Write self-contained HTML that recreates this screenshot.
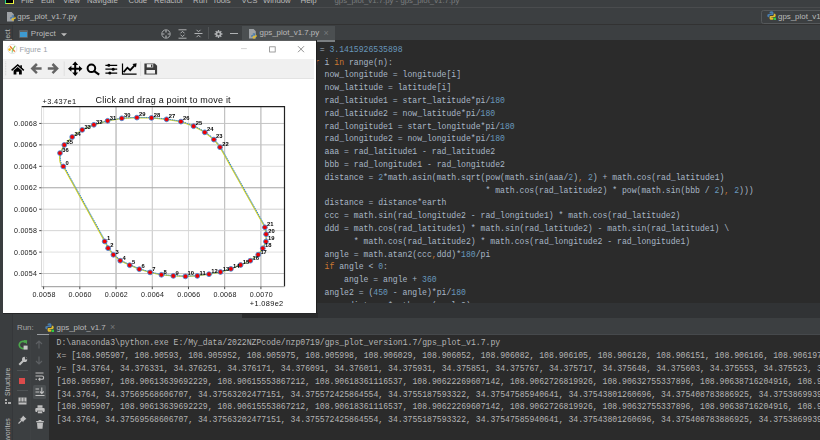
<!DOCTYPE html>
<html><head><meta charset="utf-8">
<style>
*{margin:0;padding:0;box-sizing:border-box}
html,body{width:820px;height:440px;overflow:hidden;background:#2b2b2b;font-family:"Liberation Sans",sans-serif}
.a{position:absolute}
.ui{color:#bbbbbb;font-size:7.9px;white-space:pre;line-height:10px}
svg.a{overflow:visible}
#menubar{left:0;top:0;width:820px;height:7.5px;background:#3c3f41;overflow:hidden;border-bottom:1px solid #4a4c4e}
#menubar span{position:absolute;top:-4px;font-size:7.8px;line-height:10px;color:#bbbbbb}
#navbar{left:0;top:7.5px;width:820px;height:17.5px;background:#3c3f41;border-bottom:1px solid #323232}
#toolhdr{left:0;top:25px;width:820px;height:15px;background:#3c3f41}
#lstrip{left:0;top:25px;width:13px;height:415px;background:#3a3d3f;border-right:1px solid #35373a}
#editor{left:316px;top:40px;width:504px;height:263.3px;background:#2b2b2b;overflow:hidden}
pre{font-family:"Liberation Mono",monospace;font-size:8.13px;line-height:12.8px;color:#a9b7c6;white-space:pre}
pre b{font-weight:normal}
pre .k{color:#cc7832}
pre .n{color:#6897bb}
#code{position:absolute;left:-11px;top:3.8px}
#band1{left:242px;top:303.3px;width:578px;height:14.7px;background:#313335}
#runhdr{left:13px;top:318px;width:807px;height:17.4px;background:#3c3f41}
#runleft{left:13px;top:335.4px;width:36px;height:105px;background:#3c3f41}
#console{left:48.5px;top:335.4px;width:772px;height:105px;background:#2b2b2b;overflow:hidden}
#con{position:absolute;left:8px;top:2px;color:#b4b4b4;font-size:8.13px}
#fig{left:3px;top:39.6px;width:313px;height:273.2px;background:#ffffff;border-top:1px solid #5c5e60}
#figtb{left:3px;top:59px;width:311px;height:19.5px;background:#f0f0f0;border-bottom:1px solid #e3e3e3}
#plot{left:0;top:0;width:820px;height:440px;will-change:transform}
.g{stroke-width:1}
.sp{stroke:#222;stroke-width:1.2;fill:none}
.sp2{stroke:#b0b0b0;stroke-width:0.8;fill:none}
.tk{stroke:#222;stroke-width:0.8}
.tl{font-size:7.1px;fill:#222;letter-spacing:0.25px}
.tt{font-size:9px;fill:#111;letter-spacing:0.2px}
.ot{font-size:7.4px;fill:#111;letter-spacing:0.35px}
.ln1{stroke:#cfcf30;stroke-width:1.3;fill:none}
.ln2{stroke:#3a8ad8;stroke-width:1.0;fill:none;stroke-dasharray:1.4 0.8}
.mk{fill:#f00000;stroke:#3f86d6;stroke-width:0.85}
.lb{font-size:5.8px;font-weight:bold;fill:#000}
.ic{stroke:#afb1b3;fill:none}
</style></head><body>
<div id="menubar" class="a">
 <div class="a" style="left:4.8px;top:-3px;width:9px;height:6.7px;background:#000;border:0.8px solid #21d789;border-right-color:#fcf84a;border-bottom-color:#d8e83a"></div>
 <span style="left:21px">File</span><span style="left:41px">Edit</span><span style="left:63px">View</span><span style="left:87px">Navigate</span><span style="left:128.5px">Code</span><span style="left:154px">Refactor</span><span style="left:193px">Run</span><span style="left:212.5px">Tools</span><span style="left:241.5px">VCS</span><span style="left:263px">Window</span><span style="left:300.5px">Help</span>
 <span style="left:334.5px;color:#7a7c7e">gps_plot_v1.7.py - gps_plot_v1.7.py</span>
</div>
<div id="navbar" class="a">
 <svg class="a" style="left:7.0px;top:4.0px" width="7" height="9.5" viewBox="0 0 7 9.5"><path d="M0 0 H4.6 L6.8 2.2 V9.5 H0Z" fill="#9ea2a6"/></svg><svg class="a" style="left:9.6px;top:7.6px" width="5.9" height="5.9" viewBox="0 0 9 9"><path d="M4.4 0.3 C2.6 0.3 2.6 1.1 2.6 1.6 V2.6 H4.6 V3 H1.6 C0.6 3 0.3 3.8 0.3 4.6 C0.3 5.6 0.7 6.3 1.5 6.3 H2.2 V5.2 C2.2 4.5 2.8 3.9 3.5 3.9 H5.5 C6.1 3.9 6.4 3.5 6.4 3 V1.6 C6.4 0.9 5.7 0.3 4.4 0.3Z" fill="#4a7cab"/><path d="M4.6 8.7 C6.4 8.7 6.4 7.9 6.4 7.4 V6.4 H4.4 V6 H7.4 C8.4 6 8.7 5.2 8.7 4.4 C8.7 3.4 8.3 2.7 7.5 2.7 H6.8 V3.8 C6.8 4.5 6.2 5.1 5.5 5.1 H3.5 C2.9 5.1 2.6 5.5 2.6 6 V7.4 C2.6 8.1 3.3 8.7 4.6 8.7Z" fill="#e0bc2e"/></svg>
 <div class="a ui" style="left:17.3px;top:4px">gps_plot_v1.7.py</div>
 <div class="a" style="left:760.7px;top:2.5px;width:70px;height:13.5px;border:1px solid #55585a;border-radius:2.5px"></div>
 <svg class="a" style="left:766.5px;top:3.5px" width="9.0" height="9.0" viewBox="0 0 9 9"><path d="M4.4 0.3 C2.6 0.3 2.6 1.1 2.6 1.6 V2.6 H4.6 V3 H1.6 C0.6 3 0.3 3.8 0.3 4.6 C0.3 5.6 0.7 6.3 1.5 6.3 H2.2 V5.2 C2.2 4.5 2.8 3.9 3.5 3.9 H5.5 C6.1 3.9 6.4 3.5 6.4 3 V1.6 C6.4 0.9 5.7 0.3 4.4 0.3Z" fill="#4a7cab"/><path d="M4.6 8.7 C6.4 8.7 6.4 7.9 6.4 7.4 V6.4 H4.4 V6 H7.4 C8.4 6 8.7 5.2 8.7 4.4 C8.7 3.4 8.3 2.7 7.5 2.7 H6.8 V3.8 C6.8 4.5 6.2 5.1 5.5 5.1 H3.5 C2.9 5.1 2.6 5.5 2.6 6 V7.4 C2.6 8.1 3.3 8.7 4.6 8.7Z" fill="#e0bc2e"/><rect x="6.6" y="6.6" width="2.4" height="2.4" fill="#2ecc40"/></svg>
 <div class="a ui" style="left:778px;top:4.6px">gps_plot_v1.7.py</div>
</div>
<div id="toolhdr" class="a">
 <div class="a" style="left:19px;top:5px;width:9px;height:8.3px;background:#5e6265;border-radius:1px"></div>
 <div class="a" style="left:20.3px;top:6.6px;width:6.4px;height:5px;background:#3d9ad1"></div>
 <div class="a ui" style="left:30.8px;top:4.2px;font-size:8px;color:#bbbbbb">Project</div>
 <svg class="a" style="left:61px;top:7.5px" width="6" height="4" viewBox="0 0 6 4"><path d="M0 0.3 H6 L3 3.3Z" fill="#bbbbbb"/></svg>
 <svg class="a" style="left:161px;top:4.2px" width="10" height="10" viewBox="0 0 10 10">
  <circle cx="5" cy="5" r="4.2" class="ic" stroke-width="0.9"/>
  <path d="M5 1.2V3.4 M5 6.6V8.8 M1.2 5H3.4 M6.6 5H8.8" class="ic" stroke-width="1.2"/>
 </svg>
 <svg class="a" style="left:177.5px;top:4px" width="9" height="10" viewBox="0 0 9 10">
  <path d="M0.5 0.8H8.5 M0.5 9.2H8.5" class="ic" stroke-width="1"/>
  <path d="M2.5 4.3L4.5 2.3L6.5 4.3 M2.5 5.7L4.5 7.7L6.5 5.7" class="ic" stroke-width="1"/>
 </svg>
 <svg class="a" style="left:194px;top:4.2px" width="9" height="9" viewBox="0 0 9 9">
  <path d="M0.5 4.5H8.5" class="ic" stroke-width="1"/>
  <path d="M2.5 0.8L4.5 2.8L6.5 0.8 M2.5 8.2L4.5 6.2L6.5 8.2" class="ic" stroke-width="1"/>
 </svg>
 <div class="a" style="left:207.8px;top:2px;width:1px;height:12px;background:#515456"></div>
 <svg class="a" style="left:213.5px;top:4.6px" width="9" height="8" viewBox="0 0 9 8">
  <path d="M3.82 0.06 L5.18 0.06 L5.14 1.17 L6.05 1.55 L6.81 0.73 L7.77 1.69 L6.95 2.45 L7.33 3.36 L8.44 3.32 L8.44 4.68 L7.33 4.64 L6.95 5.55 L7.77 6.31 L6.81 7.27 L6.05 6.45 L5.14 6.83 L5.18 7.94 L3.82 7.94 L3.86 6.83 L2.95 6.45 L2.19 7.27 L1.23 6.31 L2.05 5.55 L1.67 4.64 L0.56 4.68 L0.56 3.32 L1.67 3.36 L2.05 2.45 L1.23 1.69 L2.19 0.73 L2.95 1.55 L3.86 1.17Z" fill="#afb1b3"/>
  <circle cx="4.5" cy="4" r="1.2" fill="#3c3f41"/>
 </svg>
 <div class="a" style="left:229.7px;top:8.2px;width:8px;height:1.2px;background:#afb1b3"></div>
 <div class="a" style="left:242px;top:1px;width:92.7px;height:14px;background:#4b4f51"></div>
 <div class="a" style="left:242px;top:14.5px;width:92.7px;height:2px;background:#7b7f82"></div>
 <svg class="a" style="left:248.7px;top:4.0px" width="7" height="9.5" viewBox="0 0 7 9.5"><path d="M0 0 H4.6 L6.8 2.2 V9.5 H0Z" fill="#9ea2a6"/></svg><svg class="a" style="left:251.3px;top:7.6px" width="5.9" height="5.9" viewBox="0 0 9 9"><path d="M4.4 0.3 C2.6 0.3 2.6 1.1 2.6 1.6 V2.6 H4.6 V3 H1.6 C0.6 3 0.3 3.8 0.3 4.6 C0.3 5.6 0.7 6.3 1.5 6.3 H2.2 V5.2 C2.2 4.5 2.8 3.9 3.5 3.9 H5.5 C6.1 3.9 6.4 3.5 6.4 3 V1.6 C6.4 0.9 5.7 0.3 4.4 0.3Z" fill="#4a7cab"/><path d="M4.6 8.7 C6.4 8.7 6.4 7.9 6.4 7.4 V6.4 H4.4 V6 H7.4 C8.4 6 8.7 5.2 8.7 4.4 C8.7 3.4 8.3 2.7 7.5 2.7 H6.8 V3.8 C6.8 4.5 6.2 5.1 5.5 5.1 H3.5 C2.9 5.1 2.6 5.5 2.6 6 V7.4 C2.6 8.1 3.3 8.7 4.6 8.7Z" fill="#e0bc2e"/></svg>
 <div class="a ui" style="left:259.5px;top:2.8px">gps_plot_v1.7.py</div>
 <div class="a ui" style="left:323.5px;top:2.5px;font-size:9px;color:#75787a">×</div>
</div>
<div id="lstrip" class="a">
 <div class="a ui" style="left:3px;top:25.5px;transform-origin:0 0;transform:rotate(-90deg);font-size:7px;color:#bbbbbb">Project</div>
 <div class="a ui" style="left:3px;top:371px;transform-origin:0 0;transform:rotate(-90deg);font-size:7px;color:#bbbbbb">Structure</div>
 <svg class="a" style="left:5px;top:373.5px" width="6" height="5" viewBox="0 0 6 5"><rect x="0" y="0" width="2" height="2" fill="#aaa"/><rect x="0" y="3" width="2" height="2" fill="#aaa"/><rect x="3" y="3" width="3" height="2" fill="#aaa"/></svg>
 <div class="a ui" style="left:3px;top:421.5px;transform-origin:0 0;transform:rotate(-90deg);font-size:7px;color:#bbbbbb">Favorites</div>
</div>
<div id="editor" class="a"><pre id="code">pi = <b class="n">3.1415926535898</b>
<b class="k">for</b> i <b class="k">in</b> range(n):
    now_longitude = longitude[i]
    now_latitude = latitude[i]
    rad_latitude1 = start_latitude*pi/<b class="n">180</b>
    rad_latitude2 = now_latitude*pi/<b class="n">180</b>
    rad_longitude1 = start_longitude*pi/<b class="n">180</b>
    rad_longitude2 = now_longitude*pi/<b class="n">180</b>
    aaa = rad_latitude1 - rad_latitude2
    bbb = rad_longitude1 - rad_longitude2
    distance = <b class="n">2</b>*math.asin(math.sqrt(pow(math.sin(aaa/<b class="n">2</b>)<b class="k">,</b> <b class="n">2</b>) + math.cos(rad_latitude1)
                                     * math.cos(rad_latitude2) * pow(math.sin(bbb / <b class="n">2</b>)<b class="k">,</b> <b class="n">2</b>)))
    distance = distance*earth
    ccc = math.sin(rad_longitude2 - rad_longitude1) * math.cos(rad_latitude2)
    ddd = math.cos(rad_latitude1) * math.sin(rad_latitude2) - math.sin(rad_latitude1) \
          * math.cos(rad_latitude2) * math.cos(rad_longitude2 - rad_longitude1)
    angle = math.atan2(ccc<b class="k">,</b>ddd)*<b class="n">180</b>/pi
    <b class="k">if</b> angle &lt; <b class="n">0</b>:
        angle = angle + <b class="n">360</b>
    angle2 = (<b class="n">450</b> - angle)*pi/<b class="n">180</b>
    xx = distance*math.cos(angle2)</pre></div>
<div id="band1" class="a"></div>
<div class="a" style="left:316px;top:39.5px;width:18.7px;height:2px;background:#7b7f82"></div>
<div id="runhdr" class="a">
 <div class="a ui" style="left:4px;top:4.6px;color:#a8a8a8">Run:</div>
 <svg class="a" style="left:32.0px;top:5.0px" width="9.0" height="9.0" viewBox="0 0 9 9"><path d="M4.4 0.3 C2.6 0.3 2.6 1.1 2.6 1.6 V2.6 H4.6 V3 H1.6 C0.6 3 0.3 3.8 0.3 4.6 C0.3 5.6 0.7 6.3 1.5 6.3 H2.2 V5.2 C2.2 4.5 2.8 3.9 3.5 3.9 H5.5 C6.1 3.9 6.4 3.5 6.4 3 V1.6 C6.4 0.9 5.7 0.3 4.4 0.3Z" fill="#4a7cab"/><path d="M4.6 8.7 C6.4 8.7 6.4 7.9 6.4 7.4 V6.4 H4.4 V6 H7.4 C8.4 6 8.7 5.2 8.7 4.4 C8.7 3.4 8.3 2.7 7.5 2.7 H6.8 V3.8 C6.8 4.5 6.2 5.1 5.5 5.1 H3.5 C2.9 5.1 2.6 5.5 2.6 6 V7.4 C2.6 8.1 3.3 8.7 4.6 8.7Z" fill="#e0bc2e"/><rect x="6.6" y="6.6" width="2.4" height="2.4" fill="#2ecc40"/></svg>
 <div class="a ui" style="left:43.5px;top:4.6px">gps_plot_v1.7</div>
 <div class="a ui" style="left:97px;top:4px;font-size:9px;color:#75787a">×</div>
 <div class="a" style="left:24px;top:15.8px;width:85px;height:1.8px;background:#9a9ea2"></div>
</div>
<div class="a" style="left:48.5px;top:334.4px;width:772px;height:1px;background:#46494c"></div>
<div id="runleft" class="a">
 <div class="a" style="left:16.5px;top:0;width:1px;height:105px;background:#3f4244"></div>
 <svg class="a" style="left:4.5px;top:4.6px" width="10" height="10" viewBox="0 0 10 10">
  <path d="M7.6 2.6 A3.6 3.6 0 1 0 8.3 6" stroke="#4ca64c" stroke-width="1.7" fill="none"/>
  <path d="M5.2 0 L9.2 0.3 L8.8 4.2Z" fill="#4ca64c"/>
  <rect x="5.6" y="5.6" width="4" height="4" fill="#c8c8c8"/>
 </svg>
 <svg class="a" style="left:22px;top:5px" width="8" height="9" viewBox="0 0 8 9"><path d="M4 8.5V1 M1 4L4 1L7 4" stroke="#5d6063" stroke-width="1.2" fill="none"/></svg>
 <svg class="a" style="left:4.5px;top:21px" width="10" height="10" viewBox="0 0 10 10"><path d="M1.3 8.7 L5 5" stroke="#c0c0c0" stroke-width="2" fill="none"/><circle cx="6.6" cy="3.4" r="2.6" fill="#c0c0c0"/><path d="M6.8 0 L10 3.2 L7 3.4Z" fill="#3c3f41"/></svg>
 <svg class="a" style="left:22px;top:21px" width="8" height="9" viewBox="0 0 8 9"><path d="M4 0.5V8 M1 5L4 8L7 5" stroke="#5d6063" stroke-width="1.2" fill="none"/></svg>
 <div class="a" style="left:5.8px;top:42.2px;width:6.5px;height:6.5px;background:#db4b4b"></div>
 <div class="a" style="left:3.5px;top:34.6px;width:11px;height:1px;background:#4e5254"></div>
 <div class="a" style="left:3.5px;top:55px;width:11px;height:1px;background:#4e5254"></div>
 <svg class="a" style="left:22px;top:37px" width="10" height="9" viewBox="0 0 10 9"><path d="M0.5 1H8.5 M0.5 4H7 A1.6 1.6 0 0 1 7 7.3H4 M5.2 6 L3.8 7.3 L5.2 8.6 M0.5 7.3H2" stroke="#c0c0c0" stroke-width="1.1" fill="none"/></svg>
 <div class="a" style="left:19.5px;top:49.6px;width:13.5px;height:14px;background:#4c5052;border-radius:1.5px"></div>
 <svg class="a" style="left:21.5px;top:51.5px" width="10" height="10" viewBox="0 0 10 10"><path d="M0.5 2H4 M0.5 5H4 M0.5 8.5H9.5 M6.8 0.5V6.5 M4.8 4.5L6.8 6.5L8.8 4.5" stroke="#c0c0c0" stroke-width="1.1" fill="none"/></svg>
 <svg class="a" style="left:5px;top:62px" width="9" height="8" viewBox="0 0 9 8"><rect x="0.5" y="0.5" width="8" height="7" fill="#c0c0c0"/><path d="M0.5 5H8.5" stroke="#3c3f41" stroke-width="0.9"/><path d="M3 0.5V5 M6 0.5V5" stroke="#3c3f41" stroke-width="0.7"/></svg>
 <svg class="a" style="left:22px;top:69.5px" width="10" height="9" viewBox="0 0 10 9"><rect x="2.5" y="0.3" width="5" height="2.5" fill="#c0c0c0"/><rect x="0.3" y="3" width="9.4" height="4" rx="1" fill="#c0c0c0"/><rect x="2.5" y="6" width="5" height="2.7" fill="#c0c0c0" stroke="#3c3f41" stroke-width="0.6"/></svg>
 <svg class="a" style="left:5px;top:80px" width="9" height="9" viewBox="0 0 9 9"><path d="M0.5 8.5 L4 5" stroke="#c0c0c0" stroke-width="1.1"/><path d="M5 0.5 L8.5 4 L7.3 4.5 L5.3 6.5 L5.5 7.5 L1.5 3.5 L2.5 3.7 L4.5 1.7Z" fill="#c0c0c0"/></svg>
 <svg class="a" style="left:23px;top:84.5px" width="8" height="9" viewBox="0 0 8 9"><rect x="0.2" y="1" width="7.6" height="1.3" fill="#c0c0c0"/><rect x="2.6" y="0" width="2.8" height="1.2" fill="#c0c0c0"/><path d="M1 2.8H7L6.5 8.8H1.5Z" fill="#c0c0c0"/></svg>
</div>
<div id="console" class="a"><pre id="con">D:\anaconda3\python.exe E:/My_data/2022NZPcode/nzp0719/gps_plot_version1.7/gps_plot_v1.7.py
x= [108.905907, 108.90593, 108.905952, 108.905975, 108.905998, 108.906029, 108.906052, 108.906082, 108.906105, 108.906128, 108.906151, 108.906166, 108.906197, 108.906212]
y= [34.3764, 34.376331, 34.376251, 34.376171, 34.376091, 34.376011, 34.375931, 34.375851, 34.375767, 34.375717, 34.375648, 34.375603, 34.375553, 34.375523, 34.375493]
[108.905907, 108.90613639692229, 108.90615553867212, 108.90618361116537, 108.90622269607142, 108.9062726819926, 108.90632755337896, 108.90638716204916, 108.90644547832614, 108.90650371290915]
[34.3764, 34.37569568606707, 34.37563202477151, 34.375572425864554, 34.3755187593322, 34.37547585940641, 34.37543801260696, 34.375408783886925, 34.37538699394051, 34.37537402961738]
[108.905907, 108.90613639692229, 108.90615553867212, 108.90618361116537, 108.90622269607142, 108.9062726819926, 108.90632755337896, 108.90638716204916, 108.90644547832614, 108.90650371290915]
[34.3764, 34.37569568606707, 34.37563202477151, 34.375572425864554, 34.3755187593322, 34.37547585940641, 34.37543801260696, 34.375408783886925, 34.37538699394051, 34.37537402961738]</pre></div>
<div id="fig" class="a"></div>
<div class="a" style="left:316px;top:40px;width:1.2px;height:274px;background:#1f1f1f"></div>
<div class="a" style="left:13px;top:313px;width:229px;height:5px;background:#3c3f41"></div>
<div class="a" style="left:242px;top:313px;width:76px;height:5px;background:#2a2b2c"></div>
<div class="a" style="left:3px;top:312.8px;width:315px;height:1.5px;background:#252627"></div>
<div id="figtb" class="a"></div>
<svg class="a" style="left:0;top:0" width="820" height="440" viewBox="0 0 820 440">
 <!-- title icon -->
 <circle cx="12.3" cy="49" r="4.6" fill="#fff" stroke="#d8d8d8" stroke-width="0.7"/>
 <path d="M10 46.2 L14.8 51.6" stroke="#f07b2c" stroke-width="1.4"/>
 <path d="M12.6 49.6 L15 46" stroke="#86c75a" stroke-width="1.1"/>
 <path d="M12.4 49.4 L12.2 52.6" stroke="#62c06b" stroke-width="0.9"/>
 <circle cx="9.6" cy="49.6" r="1.3" fill="#f4b61a"/>
 <!-- window controls -->
 <path d="M241 48.6 H246.8" stroke="#c8c8c8" stroke-width="0.8"/>
 <rect x="269.6" y="46.8" width="5.6" height="5.2" fill="none" stroke="#888" stroke-width="0.8"/>
 <path d="M298 46.2 L304 52.2 M304 46.2 L298 52.2" stroke="#777" stroke-width="0.8"/>
 <!-- toolbar grip -->
 <path d="M5.7 61.5 V76" stroke="#b8b8b8" stroke-width="0.6" stroke-dasharray="0.8 0.8"/>
 <path d="M64.2 61.5 V76 M140.6 61.5 V76" stroke="#d8d8d8" stroke-width="0.7"/>
 <!-- home -->
 <path d="M11.6 70.4 L17.7 65 L23.8 70.4" stroke="#000" stroke-width="1.5" fill="none"/>
 <path d="M20.3 65.2 H21.9 V68.6 L20.3 67.2Z" fill="#000"/>
 <path d="M13.6 70.6 L17.7 66.9 L21.8 70.6 V74.4 H19 V71.8 H16.4 V74.4 H13.6Z" fill="#000"/>
 <!-- back / fwd -->
 <path d="M41.6 68.6 H33 M36.9 64 L32.3 68.6 L36.9 73.2" stroke="#646464" stroke-width="2.5" fill="none"/>
 <path d="M47.8 68.6 H56.4 M52.5 64 L57.1 68.6 L52.5 73.2" stroke="#646464" stroke-width="2.5" fill="none"/>
 <!-- move -->
 <path d="M75.2 63.5 V74.2 M69.8 68.8 H80.6" stroke="#000" stroke-width="2"/>
 <path d="M75.2 61.6 L72.2 65 H78.2Z M75.2 76 L72.2 72.6 H78.2Z M68 68.8 L71.4 65.8 V71.8Z M82.4 68.8 L79 65.8 V71.8Z" fill="#000"/>
 <!-- zoom -->
 <circle cx="91.4" cy="68.3" r="3.8" fill="none" stroke="#000" stroke-width="2"/>
 <path d="M94.2 71.1 L99.2 74.6" stroke="#000" stroke-width="2.1"/>
 <!-- sliders -->
 <path d="M105.4 65.3 H117.2 M105.4 69.2 H117.2 M105.4 73.1 H117.2" stroke="#000" stroke-width="1.2"/>
 <circle cx="108.8" cy="65.3" r="1.5" fill="#000"/><circle cx="113.2" cy="69.2" r="1.5" fill="#000"/><circle cx="109.8" cy="73.1" r="1.5" fill="#000"/>
 <!-- line chart -->
 <path d="M122.5 63.4 V74.1 H136.6" stroke="#000" stroke-width="1.2" fill="none"/>
 <path d="M123.6 72.2 L127.4 67.7 L130.2 70.2 L134.6 65.4" stroke="#000" stroke-width="1.8" fill="none"/>
 <path d="M136.6 63.3 L132.4 64 L136 67.4Z" fill="#000"/>
 <!-- save -->
 <path d="M144.4 63.4 H154.8 L157.1 65.7 V74.6 H144.4Z" fill="#3a3a3a"/>
 <rect x="146.8" y="64.2" width="6.4" height="3.2" fill="#f0f0f0"/>
 <rect x="146.4" y="70" width="8.6" height="3.6" fill="#f0f0f0"/>
 <rect x="151" y="64.6" width="1.4" height="2.3" fill="#3a3a3a"/>
</svg>
<div class="a" style="left:19.5px;top:44.8px;font-size:7.6px;line-height:10px;color:#9ba1a8">Figure 1</div>
<svg id="plot" class="a" width="820" height="440" viewBox="0 0 820 440" font-family="Liberation Sans">
<line x1="43.60" y1="106.6" x2="43.60" y2="286.6" class="g" stroke="#e8e8e8"/>
<line x1="79.82" y1="106.6" x2="79.82" y2="286.6" class="g" stroke="#d0d0d0"/>
<line x1="116.04" y1="106.6" x2="116.04" y2="286.6" class="g" stroke="#a4a4a4"/>
<line x1="152.26" y1="106.6" x2="152.26" y2="286.6" class="g" stroke="#c4c4c4"/>
<line x1="188.48" y1="106.6" x2="188.48" y2="286.6" class="g" stroke="#dcdcdc"/>
<line x1="224.70" y1="106.6" x2="224.70" y2="286.6" class="g" stroke="#b4b4b4"/>
<line x1="260.92" y1="106.6" x2="260.92" y2="286.6" class="g" stroke="#acacac"/>
<line x1="41.5" y1="123.45" x2="284.5" y2="123.45" class="g" stroke="#c4c4c4"/>
<line x1="41.5" y1="144.89" x2="284.5" y2="144.89" class="g" stroke="#c4c4c4"/>
<line x1="41.5" y1="166.33" x2="284.5" y2="166.33" class="g" stroke="#dcdcdc"/>
<line x1="41.5" y1="187.77" x2="284.5" y2="187.77" class="g" stroke="#a4a4a4"/>
<line x1="41.5" y1="209.21" x2="284.5" y2="209.21" class="g" stroke="#d0d0d0"/>
<line x1="41.5" y1="230.65" x2="284.5" y2="230.65" class="g" stroke="#d4d4d4"/>
<line x1="41.5" y1="252.09" x2="284.5" y2="252.09" class="g" stroke="#e0e0e0"/>
<line x1="41.5" y1="273.53" x2="284.5" y2="273.53" class="g" stroke="#c4c4c4"/>
<path d="M41.5 106.6 H284.5 V286.6" class="sp"/>
<path d="M41.5 106.6 V286.6" stroke="#d8d8d8" stroke-width="1" fill="none"/>
<path d="M41.5 286.6 H284.5" stroke="#aaaaaa" stroke-width="1.1" fill="none"/>
<line x1="43.60" y1="286.6" x2="43.60" y2="289.2" class="tk"/>
<line x1="79.82" y1="286.6" x2="79.82" y2="289.2" class="tk"/>
<line x1="116.04" y1="286.6" x2="116.04" y2="289.2" class="tk"/>
<line x1="152.26" y1="286.6" x2="152.26" y2="289.2" class="tk"/>
<line x1="188.48" y1="286.6" x2="188.48" y2="289.2" class="tk"/>
<line x1="224.70" y1="286.6" x2="224.70" y2="289.2" class="tk"/>
<line x1="260.92" y1="286.6" x2="260.92" y2="289.2" class="tk"/>
<line x1="39.2" y1="123.45" x2="41.5" y2="123.45" class="tk"/>
<line x1="39.2" y1="144.89" x2="41.5" y2="144.89" class="tk"/>
<line x1="39.2" y1="166.33" x2="41.5" y2="166.33" class="tk"/>
<line x1="39.2" y1="187.77" x2="41.5" y2="187.77" class="tk"/>
<line x1="39.2" y1="209.21" x2="41.5" y2="209.21" class="tk"/>
<line x1="39.2" y1="230.65" x2="41.5" y2="230.65" class="tk"/>
<line x1="39.2" y1="252.09" x2="41.5" y2="252.09" class="tk"/>
<line x1="39.2" y1="273.53" x2="41.5" y2="273.53" class="tk"/>
<text x="44.00" y="297.2" class="tl" text-anchor="middle">0.0058</text>
<text x="80.22" y="297.2" class="tl" text-anchor="middle">0.0060</text>
<text x="116.44" y="297.2" class="tl" text-anchor="middle">0.0062</text>
<text x="152.66" y="297.2" class="tl" text-anchor="middle">0.0064</text>
<text x="188.88" y="297.2" class="tl" text-anchor="middle">0.0066</text>
<text x="225.10" y="297.2" class="tl" text-anchor="middle">0.0068</text>
<text x="261.32" y="297.2" class="tl" text-anchor="middle">0.0070</text>
<text x="37.2" y="125.95" class="tl" text-anchor="end">0.0068</text>
<text x="37.2" y="147.39" class="tl" text-anchor="end">0.0066</text>
<text x="37.2" y="168.83" class="tl" text-anchor="end">0.0064</text>
<text x="37.2" y="190.27" class="tl" text-anchor="end">0.0062</text>
<text x="37.2" y="211.71" class="tl" text-anchor="end">0.0060</text>
<text x="37.2" y="233.15" class="tl" text-anchor="end">0.0058</text>
<text x="37.2" y="254.59" class="tl" text-anchor="end">0.0056</text>
<text x="37.2" y="276.03" class="tl" text-anchor="end">0.0054</text>
<text x="163.2" y="102.6" class="tt" text-anchor="middle">Click and drag a point to move it</text>
<text x="42.6" y="104.4" class="ot">+3.437e1</text>
<text x="283.6" y="306.3" class="ot" text-anchor="end">+1.089e2</text>
<path d="M63.3 166.4 L104.7 241.4 L108.1 248.2 L113.4 254.8 L120.2 260.7 L129.7 265.2 L139.3 269.2 L150.1 272.4 L161.4 274.8 L173.3 275.9 L185.4 276.4 L197.3 275.9 L209.0 274.2 L220.5 272.0 L230.9 268.9 L240.6 265.0 L250.3 260.7 L258.2 254.7 L262.8 248.3 L265.9 241.6 L266.1 234.2 L264.9 227.3 L220.0 147.2 L213.9 139.6 L204.8 132.3 L193.6 126.2 L180.9 121.6 L166.6 119.3 L151.5 117.9 L136.9 117.6 L121.8 118.3 L107.6 120.8 L93.9 124.8 L82.2 129.9 L72.2 137.0 L64.3 145.0 L60.0 153.1 C59.2 158 59.6 165.5 63.3 166.4" class="ln1"/>
<path d="M63.3 166.4 L104.7 241.4 L108.1 248.2 L113.4 254.8 L120.2 260.7 L129.7 265.2 L139.3 269.2 L150.1 272.4 L161.4 274.8 L173.3 275.9 L185.4 276.4 L197.3 275.9 L209.0 274.2 L220.5 272.0 L230.9 268.9 L240.6 265.0 L250.3 260.7 L258.2 254.7 L262.8 248.3 L265.9 241.6 L266.1 234.2 L264.9 227.3 L220.0 147.2 L213.9 139.6 L204.8 132.3 L193.6 126.2 L180.9 121.6 L166.6 119.3 L151.5 117.9 L136.9 117.6 L121.8 118.3 L107.6 120.8 L93.9 124.8 L82.2 129.9 L72.2 137.0 L64.3 145.0 L60.0 153.1 C59.2 158 59.6 165.5 63.3 166.4" class="ln2" transform="translate(0.7 -0.3)"/>
<circle cx="63.3" cy="166.4" r="2.4" class="mk"/>
<circle cx="104.7" cy="241.4" r="2.4" class="mk"/>
<circle cx="108.1" cy="248.2" r="2.4" class="mk"/>
<circle cx="113.4" cy="254.8" r="2.4" class="mk"/>
<circle cx="120.2" cy="260.7" r="2.4" class="mk"/>
<circle cx="129.7" cy="265.2" r="2.4" class="mk"/>
<circle cx="139.3" cy="269.2" r="2.4" class="mk"/>
<circle cx="150.1" cy="272.4" r="2.4" class="mk"/>
<circle cx="161.4" cy="274.8" r="2.4" class="mk"/>
<circle cx="173.3" cy="275.9" r="2.4" class="mk"/>
<circle cx="185.4" cy="276.4" r="2.4" class="mk"/>
<circle cx="197.3" cy="275.9" r="2.4" class="mk"/>
<circle cx="209.0" cy="274.2" r="2.4" class="mk"/>
<circle cx="220.5" cy="272.0" r="2.4" class="mk"/>
<circle cx="230.9" cy="268.9" r="2.4" class="mk"/>
<circle cx="240.6" cy="265.0" r="2.4" class="mk"/>
<circle cx="250.3" cy="260.7" r="2.4" class="mk"/>
<circle cx="258.2" cy="254.7" r="2.4" class="mk"/>
<circle cx="262.8" cy="248.3" r="2.4" class="mk"/>
<circle cx="265.9" cy="241.6" r="2.4" class="mk"/>
<circle cx="266.1" cy="234.2" r="2.4" class="mk"/>
<circle cx="264.9" cy="227.3" r="2.4" class="mk"/>
<circle cx="220.0" cy="147.2" r="2.4" class="mk"/>
<circle cx="213.9" cy="139.6" r="2.4" class="mk"/>
<circle cx="204.8" cy="132.3" r="2.4" class="mk"/>
<circle cx="193.6" cy="126.2" r="2.4" class="mk"/>
<circle cx="180.9" cy="121.6" r="2.4" class="mk"/>
<circle cx="166.6" cy="119.3" r="2.4" class="mk"/>
<circle cx="151.5" cy="117.9" r="2.4" class="mk"/>
<circle cx="136.9" cy="117.6" r="2.4" class="mk"/>
<circle cx="121.8" cy="118.3" r="2.4" class="mk"/>
<circle cx="107.6" cy="120.8" r="2.4" class="mk"/>
<circle cx="93.9" cy="124.8" r="2.4" class="mk"/>
<circle cx="82.2" cy="129.9" r="2.4" class="mk"/>
<circle cx="72.2" cy="137.0" r="2.4" class="mk"/>
<circle cx="64.3" cy="145.0" r="2.4" class="mk"/>
<circle cx="60.0" cy="153.1" r="2.4" class="mk"/>
<text x="65.5" y="165.2" class="lb">0</text>
<text x="106.9" y="240.2" class="lb">1</text>
<text x="110.3" y="247.0" class="lb">2</text>
<text x="115.6" y="253.6" class="lb">3</text>
<text x="122.4" y="259.5" class="lb">4</text>
<text x="131.9" y="264.0" class="lb">5</text>
<text x="141.5" y="268.0" class="lb">6</text>
<text x="152.3" y="271.2" class="lb">7</text>
<text x="163.6" y="273.6" class="lb">8</text>
<text x="175.5" y="274.7" class="lb">9</text>
<text x="187.6" y="275.2" class="lb">10</text>
<text x="199.5" y="274.7" class="lb">11</text>
<text x="211.2" y="273.0" class="lb">12</text>
<text x="222.7" y="270.8" class="lb">13</text>
<text x="233.1" y="267.7" class="lb">14</text>
<text x="242.8" y="263.8" class="lb">15</text>
<text x="252.5" y="259.5" class="lb">16</text>
<text x="260.4" y="253.5" class="lb">17</text>
<text x="265.0" y="247.1" class="lb">18</text>
<text x="268.1" y="240.4" class="lb">19</text>
<text x="268.3" y="233.0" class="lb">20</text>
<text x="267.1" y="226.1" class="lb">21</text>
<text x="222.2" y="146.0" class="lb">22</text>
<text x="216.1" y="138.4" class="lb">23</text>
<text x="207.0" y="131.1" class="lb">24</text>
<text x="195.8" y="125.0" class="lb">25</text>
<text x="183.1" y="120.4" class="lb">26</text>
<text x="168.8" y="118.1" class="lb">27</text>
<text x="153.7" y="116.7" class="lb">28</text>
<text x="139.1" y="116.4" class="lb">29</text>
<text x="124.0" y="117.1" class="lb">30</text>
<text x="109.8" y="119.6" class="lb">31</text>
<text x="96.1" y="123.6" class="lb">32</text>
<text x="84.4" y="128.7" class="lb">33</text>
<text x="74.4" y="135.8" class="lb">34</text>
<text x="66.5" y="143.8" class="lb">35</text>
<text x="62.2" y="151.9" class="lb">36</text>
</svg>
</body></html>
